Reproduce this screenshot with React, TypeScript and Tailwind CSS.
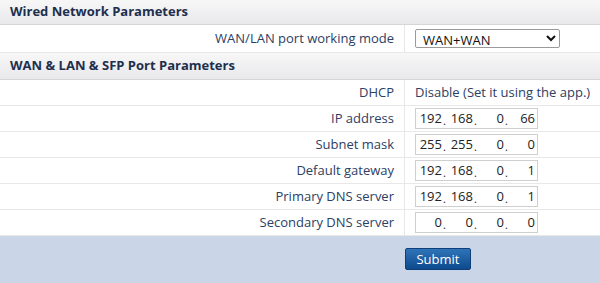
import React from 'react'

const font = { fontFamily: '"Open Sans", "Noto Sans", "Liberation Sans", sans-serif' }

function SectionHeader({ title, h }: { title: string; h: string }) {
  return (
    <div className={`${h} flex items-center pl-[10px] bg-gradient-to-b from-[#f7f7f8] to-[#e9e9eb] border-b border-[#d6d6d8] text-[13px] font-bold text-[#1e2f4d]`}>
      {title}
    </div>
  )
}

function Row({ label, children, h = 'h-[26px]' }: { label: string; children: React.ReactNode; h?: string }) {
  return (
    <div className={`flex ${h} border-b border-[#e8e8e8] bg-white`}>
      <div className="w-[405px] shrink-0 flex items-center justify-end pr-[10px] border-r border-[#e8e8e8] text-[13px] text-[#2c4064]">
        {label}
      </div>
      <div className="flex items-center pl-[10px] text-[13px] text-[#2c4064]">{children}</div>
    </div>
  )
}

function IpInput({ ip }: { ip: string[] }) {
  return (
    <div className="flex items-end w-[123px] h-[21px] border border-[#cfcfcf] bg-white text-[13px] text-[#222] leading-[19px]">
      {ip.map((p, i) => (
        <div key={i} className="flex items-end">
          <span className="w-[26px] text-right">{p}</span>
          {i < 3 && <span className="w-[5px] text-[11px] leading-[14px] text-[#222] pl-[1px]">.</span>}
        </div>
      ))}
    </div>
  )
}

export default function App() {
  const rows = [
    { label: 'IP address', ip: ['192', '168', '0', '66'] },
    { label: 'Subnet mask', ip: ['255', '255', '0', '0'] },
    { label: 'Default gateway', ip: ['192', '168', '0', '1'] },
    { label: 'Primary DNS server', ip: ['192', '168', '0', '1'] },
    { label: 'Secondary DNS server', ip: ['0', '0', '0', '0'] },
  ]

  return (
    <div className="w-[600px] h-[283px] bg-[#cbd5e8] flex flex-col" style={font}>
      <SectionHeader title="Wired Network Parameters" h="h-[25px]" />
      <Row label="WAN/LAN port working mode" h="h-[28px]">
        <select
          defaultValue="WAN+WAN"
          className="w-[145px] h-[19px] border border-[#9a9a9a] rounded-[2px] bg-white text-[13px] text-[#111] pl-[3px] leading-[17px]"
          style={font}
        >
          <option>WAN+WAN</option>
          <option>WAN+LAN</option>
        </select>
      </Row>
      <SectionHeader title="WAN & LAN & SFP Port Parameters" h="h-[27px]" />
      <Row label="DHCP">Disable (Set it using the app.)</Row>
      {rows.map((r) => (
        <Row key={r.label} label={r.label}>
          <IpInput ip={r.ip} />
        </Row>
      ))}
      <div className="flex-1 flex items-start pl-[405px] pt-[12px]">
        <button className="w-[66px] h-[22px] rounded-[2px] border border-[#0e3f78] bg-gradient-to-b from-[#2f74b8] to-[#0d4a8e] text-white text-[13px] leading-[20px]">
          Submit
        </button>
      </div>
    </div>
  )
}
